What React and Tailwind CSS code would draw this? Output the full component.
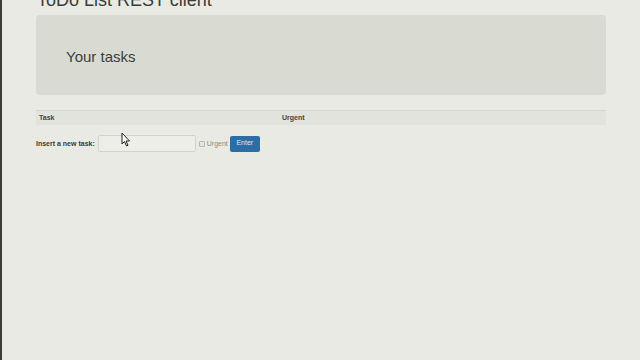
import React from "react";

function Cursor() {
  return (
    <svg
      className="absolute left-[119px] top-[132px]"
      width="10"
      height="15"
      viewBox="0 0 10 15"
    >
      <path
        d="M1 1 L1 12 L3.5 9.5 L5.5 14 L7 13.3 L5 9 L8.5 9 Z"
        fill="#ffffff"
        stroke="#222222"
        strokeWidth="1"
        strokeLinejoin="round"
      />
    </svg>
  );
}

export default function App() {
  return (
    <div
      className="relative h-[360px] w-[640px] overflow-hidden border-l-2 border-[#3a3c38] bg-[#e8eae3] text-[#333]"
      style={{ fontFamily: '"Liberation Sans", Arial, sans-serif' }}
    >
      <div className="ml-[34px] w-[570px]">
        {/* TITLE */}
        <h1 className="-mt-[11px] h-[26px] pl-[1px] text-[18px] leading-[22px] text-[#3b3d39]">
          ToDo List REST client
        </h1>

        {/* JUMBOTRON */}
        <div className="flex h-[80px] items-center rounded-[4px] bg-[#d9dbd3] pl-[30px] pt-[4px]">
          <h2 className="text-[15px] text-[#3c3e3a]">Your tasks</h2>
        </div>

        {/* TABLE */}
        <div className="mt-[15px] flex h-[15px] items-center border-t border-[#d6d8d0] bg-[#e1e3dc] text-[7px] font-bold text-[#444]">
          <div className="w-[246px] pl-[3px]">Task</div>
          <div>Urgent</div>
        </div>

        {/* FORM */}
        <div className="mt-[10px] flex items-center text-[7px]">
          <label className="pt-[1px] font-bold text-[#3a3a3a]">Insert a new task:</label>
          <input
            type="text"
            className="ml-[3px] h-[17px] w-[98px] rounded-[2px] border border-[#d2d4cc] bg-[#eceee8] outline-none"
          />
          <span className="ml-[3px] h-[6px] w-[6px] rounded-[1px] border border-[#b5b7b0] bg-[#e4e6df]" />
          <span className="ml-[2px] pt-[1px] text-[#8a8c86]">Urgent</span>
          <button className="ml-[2px] h-[16px] w-[30px] rounded-[2px] bg-[#2b6ea6] text-[7px] text-[#dfe9f3]">
            Enter
          </button>
        </div>
      </div>

      <Cursor />
    </div>
  );
}
